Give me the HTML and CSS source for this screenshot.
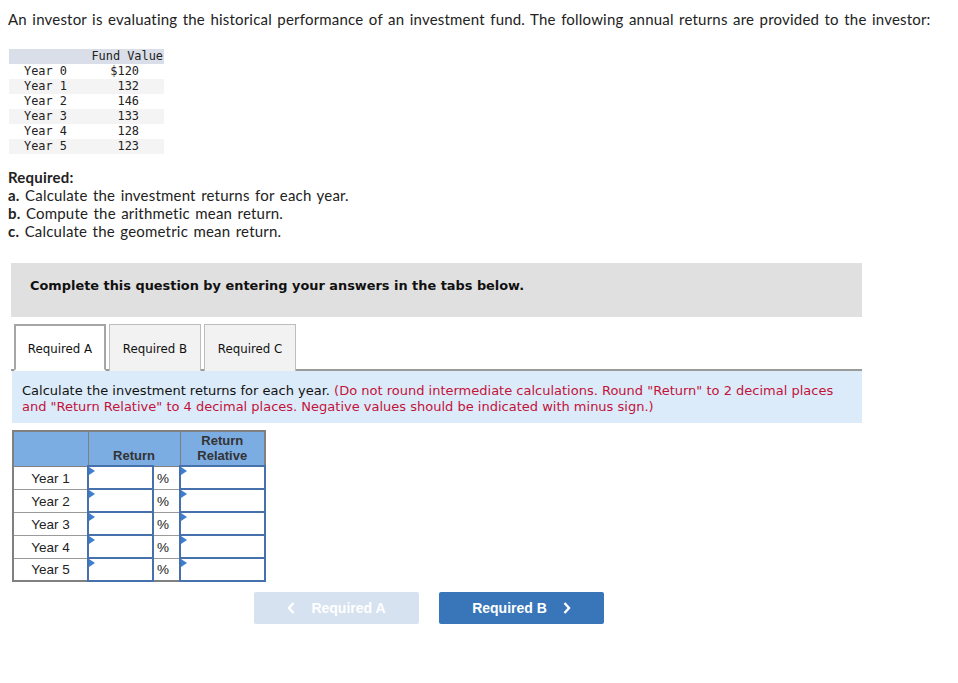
FILE: index.html
```html
<!DOCTYPE html>
<html>
<head>
<meta charset="utf-8">
<link rel="stylesheet" href="styles.css">
</head>
<body>
<div class="page">
  <p class="intro">An investor is evaluating the historical performance of an investment fund. The following annual returns are provided to the investor:</p>

  <table class="fund">
    <thead><tr><th></th><th class="fv">Fund Value</th></tr></thead>
    <tbody>
      <tr><td class="yr">Year 0</td><td class="val">$120</td></tr>
      <tr class="alt"><td class="yr">Year 1</td><td class="val">132</td></tr>
      <tr><td class="yr">Year 2</td><td class="val">146</td></tr>
      <tr class="alt"><td class="yr">Year 3</td><td class="val">133</td></tr>
      <tr><td class="yr">Year 4</td><td class="val">128</td></tr>
      <tr class="alt"><td class="yr">Year 5</td><td class="val">123</td></tr>
    </tbody>
  </table>

  <div class="required">
    <div class="req-title">Required:</div>
    <div><b>a.</b> Calculate the investment returns for each year.</div>
    <div><b>b.</b> Compute the arithmetic mean return.</div>
    <div><b>c.</b> Calculate the geometric mean return.</div>
  </div>

  <div class="work">
    <div class="banner">Complete this question by entering your answers in the tabs below.</div>

    <div class="tabs">
      <div class="tab active">Required A</div>
      <div class="tab">Required B</div>
      <div class="tab">Required C</div>
    </div>

    <div class="instr">Calculate the investment returns for each year. <span class="red">(Do not round intermediate calculations. Round "Return" to 2 decimal places and "Return Relative" to 4 decimal places. Negative values should be indicated with minus sign.)</span></div>

    <table class="ans">
      <thead>
        <tr><th class="c1"></th><th class="c2" colspan="2">Return</th><th class="c3">Return<br>Relative</th></tr>
      </thead>
      <tbody>
        <tr><td class="lab">Year 1</td><td class="inp w1"><span class="tri"></span></td><td class="pct">%</td><td class="inp"><span class="tri"></span></td></tr>
        <tr><td class="lab">Year 2</td><td class="inp w1"><span class="tri"></span></td><td class="pct">%</td><td class="inp"><span class="tri"></span></td></tr>
        <tr><td class="lab">Year 3</td><td class="inp w1"><span class="tri"></span></td><td class="pct">%</td><td class="inp"><span class="tri"></span></td></tr>
        <tr><td class="lab">Year 4</td><td class="inp w1"><span class="tri"></span></td><td class="pct">%</td><td class="inp"><span class="tri"></span></td></tr>
        <tr><td class="lab">Year 5</td><td class="inp w1"><span class="tri"></span></td><td class="pct">%</td><td class="inp"><span class="tri"></span></td></tr>
      </tbody>
    </table>

    <div class="navs">
      <div class="btn prev"><svg class="chev l" width="8" height="12" viewBox="0 0 8 12"><polyline points="6.5,1 2,6 6.5,11" fill="none" stroke="#fff" stroke-width="2.4"/></svg>Required A</div>
      <div class="btn next">Required B<svg class="chev r" width="8" height="12" viewBox="0 0 8 12"><polyline points="1.5,1 6,6 1.5,11" fill="none" stroke="#fff" stroke-width="2.4"/></svg></div>
    </div>
  </div>
</div>
</body>
</html>
```

FILE: styles.css
```css
* { box-sizing: border-box; }
body { margin: 0; background: #fff; color: #222; }
.page { padding: 8px 8px 0 8px; font-family: "Lato", "Open Sans", sans-serif; }

.intro { margin: 2px 0 0 0; font-size: 15px; line-height: 18px; color: #222; letter-spacing: 0.2px; word-spacing: 1.4px; white-space: nowrap; }

.fund { margin: 21px 0 0 1px; border-collapse: collapse; font-family: "DejaVu Sans Mono", monospace; font-size: 11.9px; color: #222; }
.fund th, .fund td { padding: 0; height: 15px; line-height: 15px; font-weight: normal; white-space: nowrap; }
.fund thead tr { background: #dadee8; }
.fund th.fv { text-align: right; width: 73px; padding-right: 1px; }
.fund td.yr { width: 82px; padding-left: 15px; }
.fund td.val { text-align: right; padding-right: 25px; }
.fund tr.alt { background: #f4f4f4; }

.required { margin-top: 14px; font-size: 15px; line-height: 18px; color: #222; letter-spacing: 0.2px; word-spacing: 1.4px; }
.req-title { font-weight: bold; }
.required b { font-weight: bold; }

.work { margin: 23px 0 0 3px; width: 851px; }
.banner { background: #e0e0e0; height: 54px; padding: 0 0 10px 19px; display: flex; align-items: center; font-family: "DejaVu Sans", sans-serif; font-weight: bold; font-size: 12.9px; color: #111; }

.tabs { display: flex; gap: 3px; margin-top: 7px; padding-left: 3px; border-bottom: 2px solid #9a9a9a; }
.tab { width: 92px; height: 47px; margin-bottom: -2px; padding-top: 2px; border: 1px solid #bdbdbd; border-bottom: none; background: #f2f2f2; display: flex; align-items: center; justify-content: center; font-family: "DejaVu Sans", sans-serif; font-size: 11.8px; color: #111; }
.tab.active { background: #fff; border: 2px solid #a6a6a6; border-bottom: 2px solid #fff; }

.instr { margin-left: 1px; background: #dbebf9; padding: 12px 10px 8px 10px; font-family: "DejaVu Sans", sans-serif; font-size: 13px; line-height: 16px; color: #111; }
.instr .red { color: #c3123b; }

.ans { margin: 7px 0 0 1px; border-collapse: collapse; font-family: "Liberation Sans", Arial, sans-serif; font-size: 13.5px; color: #222; border: 2px solid #808080; }
.ans th { background: #7bace2; font-weight: bold; color: #333; height: 35px; padding: 0; line-height: 15px; vertical-align: bottom; padding-bottom: 2px; border: 1px solid #808080; font-size: 13px; }
.ans th.c1 { width: 75px; }
.ans th.c2 { width: 92px; }
.ans th.c3 { width: 85px; }
.ans td { height: 23px; padding: 0; border: 1px solid #9a9a9a; }
.ans td.lab { text-align: center; padding-top: 1px; }
.ans td.pct { text-align: left; padding-left: 3px; padding-top: 1px; width: 27px; }
.ans td.inp { position: relative; border: 2px solid #4671ad; background: #fff; }
.ans td.w1 { width: 65px; }
.tri { position: absolute; left: 0; top: 0; width: 0; height: 0; border-top: 4px solid transparent; border-bottom: 4px solid transparent; border-left: 6px solid #3c7fd0; }

.navs { display: flex; gap: 20px; margin: 10px 0 0 243px; }
.btn { width: 165px; height: 32px; border-radius: 2px; display: flex; align-items: center; justify-content: center; font-family: "Liberation Sans", Arial, sans-serif; font-weight: bold; font-size: 14px; color: #fff; }
.btn.prev { background: #d6e2f0; }
.btn.next { background: #3876b9; }
.chev { display: block; }
.chev.l { margin-right: 16px; }
.chev.r { margin-left: 16px; }
```
